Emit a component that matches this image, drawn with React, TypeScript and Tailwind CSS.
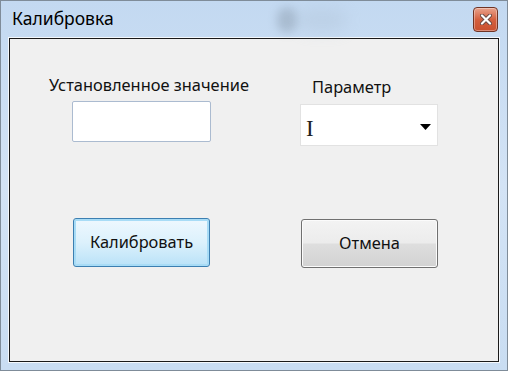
import React from "react";

export default function App() {
  const font = { fontFamily: '"Noto Sans", "Open Sans", sans-serif' };
  return (
    <div
      className="w-[508px] h-[371px] overflow-hidden border border-[#7f8c99] flex flex-col bg-gradient-to-b from-[#c3d9f1] via-[#d3e3f5] to-[#c9ddf2] relative"
      style={font}
    >
      {/* blurred glass spot */}
      <div className="absolute left-[276px] top-[6px] w-[20px] h-[26px] rounded-full bg-[#7f8fa0] opacity-40 blur-[5px]" />
      <div className="absolute left-[296px] top-[8px] w-[50px] h-[22px] rounded-full bg-[#a9bbce] opacity-30 blur-[8px]" />
      {/* title bar */}
      <div className="h-[37px] flex items-center pl-[11px] pr-[9px] relative">
        <span className="text-[17.5px] text-black leading-none mt-[-2px]">Калибровка</span>
        <div className="ml-auto mt-[-1px] w-[25px] h-[25px] rounded-[4px] border border-[#6f3324] bg-gradient-to-b from-[#e8a28c] via-[#d4603f] to-[#c9502f] flex items-center justify-center shadow-[inset_0_0_0_1px_rgba(255,255,255,0.35)]">
          <svg width="12" height="11" viewBox="0 0 12 11">
            <path d="M2 1.5 L10 9.5 M10 1.5 L2 9.5" stroke="#6a4a44" strokeWidth="4" strokeLinecap="round" />
            <path d="M2 1.5 L10 9.5 M10 1.5 L2 9.5" stroke="#ffffff" strokeWidth="2.2" strokeLinecap="round" />
          </svg>
        </div>
      </div>
      {/* client area */}
      <div className="mx-[8px] mb-[8px] flex-1 border border-[#1a1a1a] shadow-[0_0_0_1px_#f4f8fc] bg-[#f0f0f0] flex">
        {/* column A */}
        <div className="w-[275px] flex flex-col">
          <div className="ml-[39px] mt-[36px] text-[16.4px] leading-[20px] text-[#111]">Установленное значение</div>
          <div className="ml-[62px] mt-[6px] w-[139px] h-[41px] bg-white border border-[#abbbd0] rounded-[2px]" />
          <div className="ml-[63px] mt-[76px] w-[137px] h-[49px] rounded-[3px] border border-[#3c7fb1] shadow-[inset_0_0_0_2px_#a8dcf6] bg-gradient-to-b from-[#eef8fe] via-[#dcf1fc] to-[#b9e2f8] flex items-center justify-center">
            <span className="text-[16.4px] text-[#111]">Калибровать</span>
          </div>
        </div>
        {/* column B */}
        <div className="flex flex-col">
          <div className="ml-[27px] mt-[38px] text-[16.4px] leading-[20px] text-[#111]">Параметр</div>
          <div className="ml-[15px] mt-[7px] w-[138px] h-[42px] bg-white border border-[#e2e2e2] flex items-center pl-[5px] pr-[6px]">
            <span className="text-[23px] leading-none text-[#222] mt-[6px]" style={{ fontFamily: '"Liberation Serif", serif' }}>I</span>
            <svg className="ml-auto mt-[3px]" width="11" height="6" viewBox="0 0 11 6">
              <path d="M0 0 H11 L5.5 6 Z" fill="#000" />
            </svg>
          </div>
          <div className="ml-[16px] mt-[73px] w-[137px] h-[49px] rounded-[3px] border border-[#707070] shadow-[inset_0_0_0_1px_#fbfbfb] bg-[linear-gradient(to_bottom,#f3f3f3_0%,#ececec_48%,#dedede_52%,#d2d2d2_100%)] flex items-center justify-center">
            <span className="text-[16.4px] text-[#111]">Отмена</span>
          </div>
        </div>
      </div>
    </div>
  );
}
